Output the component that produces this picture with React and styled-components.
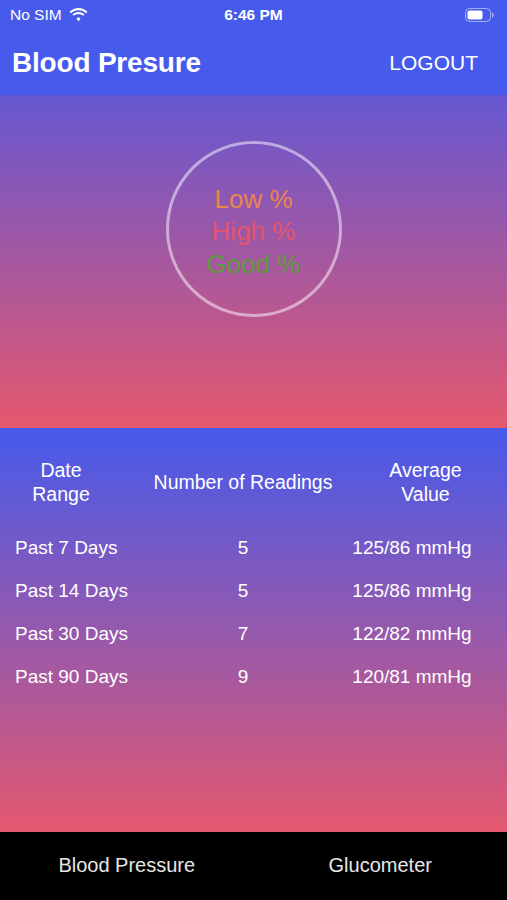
import React from 'react'
import styled, { createGlobalStyle } from 'styled-components'

const GlobalStyle = createGlobalStyle`
  html, body {
    margin: 0;
    padding: 0;
    background: #000;
  }
  body {
    font-family: "Liberation Sans", Arial, sans-serif;
    -webkit-font-smoothing: antialiased;
  }
`

const Screen = styled.div`
  width: 507px;
  height: 900px;
  display: flex;
  flex-direction: column;
  overflow: hidden;
  color: #fff;
`

const Header = styled.header`
  height: 95px;
  background: #465aeb;
  display: flex;
  flex-direction: column;
`

const StatusBar = styled.div`
  height: 30px;
  display: grid;
  grid-template-columns: 1fr auto 1fr;
  align-items: center;
  padding: 0 10px;
  font-size: 15.5px;
`

const StatusLeft = styled.div`
  display: flex;
  align-items: center;
  gap: 7px;
`

const Clock = styled.div`
  font-weight: 700;
  font-size: 15.5px;
`

const StatusRight = styled.div`
  display: flex;
  justify-content: flex-end;
  padding-right: 2px;
`

const NavBar = styled.div`
  flex: 1;
  display: flex;
  align-items: center;
  justify-content: space-between;
  padding: 0 29px 0 12px;
`

const Title = styled.h1`
  margin: 0;
  font-size: 28px;
  font-weight: 700;
  letter-spacing: -0.2px;
`

const Logout = styled.button`
  background: none;
  border: none;
  color: #fff;
  font-family: inherit;
  font-size: 21px;
  padding: 0;
`

const ChartSection = styled.section`
  height: 333px;
  background: linear-gradient(180deg, #6657d1 0%, #e5586e 100%);
  display: flex;
  justify-content: center;
  padding-top: 46px;
  box-sizing: border-box;
`

const Ring = styled.div`
  width: 176px;
  height: 176px;
  box-sizing: border-box;
  border: 3px solid rgba(255, 255, 255, 0.5);
  border-radius: 50%;
  display: flex;
  flex-direction: column;
  align-items: center;
  justify-content: center;
  font-size: 26px;
  line-height: 32.5px;
  padding-top: 5px;
`

const Stat = styled.div`
  color: ${p => p.color};
  font-weight: 300;
`

const TableSection = styled.section`
  flex: 1;
  background: linear-gradient(180deg, #465aeb 0%, #e4586f 100%);
  padding-top: 30px;
  box-sizing: border-box;
`

const HeadRow = styled.div`
  display: grid;
  grid-template-columns: 122px 242px 1fr;
  padding-right: 20px;
  align-items: center;
  text-align: center;
  font-size: 19.5px;
  line-height: 24px;
  margin-bottom: 20px;
`

const Row = styled.div`
  display: grid;
  grid-template-columns: 168px 120px 1fr;
  padding-left: 15px;
  height: 43px;
  align-items: center;
  font-size: 19px;
`

const Cell = styled.div`
  text-align: ${p => p.align || 'left'};
  padding-left: ${p => p.inset || 0}px;
`

const TabBar = styled.nav`
  height: 68px;
  background: #000;
  display: grid;
  grid-template-columns: 1fr 1fr;
  align-items: center;
  padding-bottom: 2px;
  box-sizing: border-box;
`

const Tab = styled.div`
  text-align: center;
  font-size: 20px;
  color: #e6e6e6;
`

const Wifi = () => (
  <svg width="19" height="14" viewBox="0 0 19 14">
    <path d="M9.5 2.2c2.9 0 5.5 1.1 7.5 3l1.5-1.5C16.1 1.4 12.9 0 9.5 0S2.9 1.4.5 3.7L2 5.2c2-1.9 4.6-3 7.5-3z" fill="#fff" />
    <path d="M9.5 6c1.8 0 3.4.7 4.6 1.8l1.5-1.5C14 4.8 11.9 3.9 9.5 3.9S5 4.8 3.4 6.3l1.5 1.5C6.1 6.7 7.7 6 9.5 6z" fill="#fff" />
    <path d="M9.5 9.6c.8 0 1.5.3 2 .8L9.5 13.6 7.5 10.4c.5-.5 1.2-.8 2-.8z" fill="#fff" />
  </svg>
)

const Battery = () => (
  <svg width="30" height="14" viewBox="0 0 30 14">
    <rect x="0.5" y="0.5" width="25" height="13" rx="4" fill="none" stroke="rgba(255,255,255,0.5)" />
    <rect x="2.5" y="2.5" width="15" height="9" rx="2" fill="#fff" />
    <path d="M27 4.5c1.2.3 1.8 1.3 1.8 2.5s-.6 2.2-1.8 2.5z" fill="rgba(255,255,255,0.5)" />
  </svg>
)

const rows = [
  { range: 'Past 7 Days', count: 5, avg: '125/86 mmHg' },
  { range: 'Past 14 Days', count: 5, avg: '125/86 mmHg' },
  { range: 'Past 30 Days', count: 7, avg: '122/82 mmHg' },
  { range: 'Past 90 Days', count: 9, avg: '120/81 mmHg' },
]

export default function App() {
  return (
    <>
      <GlobalStyle />
      <Screen>
        <Header>
          <StatusBar>
            <StatusLeft>
              <span>No SIM</span>
              <Wifi />
            </StatusLeft>
            <Clock>6:46 PM</Clock>
            <StatusRight>
              <Battery />
            </StatusRight>
          </StatusBar>
          <NavBar>
            <Title>Blood Presure</Title>
            <Logout>LOGOUT</Logout>
          </NavBar>
        </Header>

        <ChartSection>
          <Ring>
            <Stat color="#e8864c">Low %</Stat>
            <Stat color="#e2566a">High %</Stat>
            <Stat color="#5e9a3c">Good %</Stat>
          </Ring>
        </ChartSection>

        <TableSection>
          <HeadRow>
            <div>Date<br />Range</div>
            <div>Number of Readings</div>
            <div>Average<br />Value</div>
          </HeadRow>
          {rows.map(r => (
            <Row key={r.range}>
              <Cell>{r.range}</Cell>
              <Cell align="center">{r.count}</Cell>
              <Cell align="center" inset={14}>{r.avg}</Cell>
            </Row>
          ))}
        </TableSection>

        <TabBar>
          <Tab>Blood Pressure</Tab>
          <Tab>Glucometer</Tab>
        </TabBar>
      </Screen>
    </>
  )
}
